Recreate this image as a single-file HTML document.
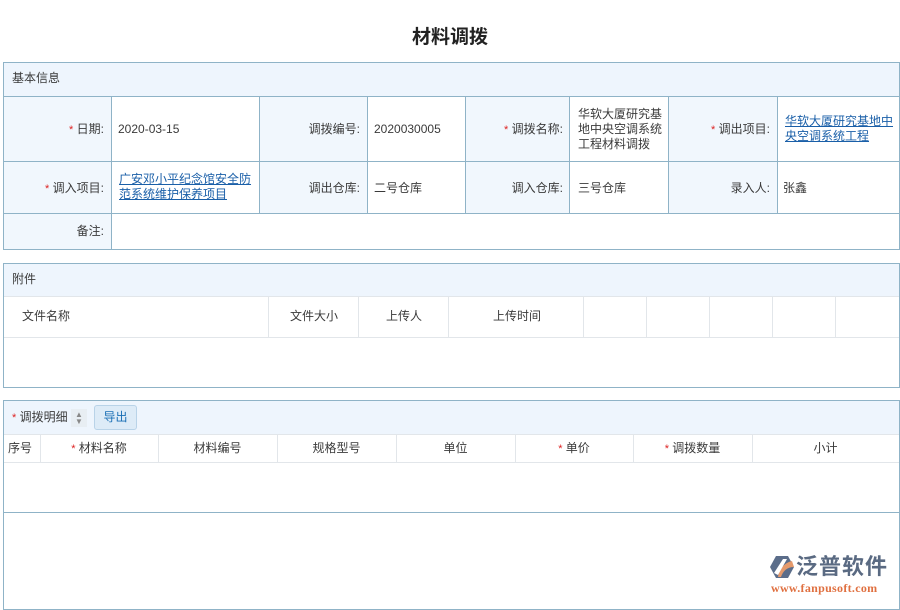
<!DOCTYPE html>
<html><head><meta charset="utf-8"><style>
*{margin:0;padding:0;box-sizing:border-box}
body{width:900px;height:600px;background:#fff;position:relative;overflow:hidden;font-family:"Liberation Sans","Noto Sans CJK SC",sans-serif;font-size:12px;color:#3a3a3a}
.a{position:absolute}
.b{border:1px solid #8fb3c7}
.h{background:#eef5fd}
.lb{background:#f1f7fd}
.t{position:absolute;line-height:15px}
.r{text-align:right}
.s{color:#d22;font-size:11px}
.lk{color:#1a5fa8;text-decoration:underline}
.vl{position:absolute;width:1px;background:#8fb3c7}
.hl{position:absolute;height:1px;background:#8fb3c7}
.gv{position:absolute;width:1px;background:#e2e6ea}
.gh{position:absolute;height:1px;background:#e2e6ea}
</style></head><body>
<div class="a" style="left:0;top:22px;width:900px;text-align:center;font-size:19px;font-weight:bold;color:#222">材料调拨</div>

<div class="a b" style="left:3px;top:62px;width:897px;height:188px"></div>
<div class="a h" style="left:4px;top:63px;width:895px;height:33px"></div>
<div class="t" style="left:12px;top:71px">基本信息</div>
<div class="a lb" style="left:4px;top:97px;width:107px;height:152px"></div>
<div class="a lb" style="left:260px;top:97px;width:107px;height:116px"></div>
<div class="a lb" style="left:466px;top:97px;width:103px;height:116px"></div>
<div class="a lb" style="left:669px;top:97px;width:108px;height:116px"></div>
<div class="hl" style="left:3px;top:96px;width:897px"></div>
<div class="hl" style="left:3px;top:161px;width:897px"></div>
<div class="hl" style="left:3px;top:213px;width:897px"></div>
<div class="vl" style="left:111px;top:96px;height:153px"></div>
<div class="vl" style="left:259px;top:96px;height:117px"></div>
<div class="vl" style="left:367px;top:96px;height:117px"></div>
<div class="vl" style="left:465px;top:96px;height:117px"></div>
<div class="vl" style="left:569px;top:96px;height:117px"></div>
<div class="vl" style="left:668px;top:96px;height:117px"></div>
<div class="vl" style="left:777px;top:96px;height:117px"></div>

<div class="t r" style="left:4px;width:100px;top:122px"><span class="s">*</span> 日期:</div>
<div class="t" style="left:118px;top:122px">2020-03-15</div>
<div class="t r" style="left:260px;width:100px;top:122px">调拨编号:</div>
<div class="t" style="left:374px;top:122px">2020030005</div>
<div class="t r" style="left:466px;width:97px;top:122px"><span class="s">*</span> 调拨名称:</div>
<div class="t" style="left:578px;top:107px;width:88px">华软大厦研究基地中央空调系统工程材料调拨</div>
<div class="t r" style="left:669px;width:101px;top:122px"><span class="s">*</span> 调出项目:</div>
<div class="t lk" style="left:785px;top:114px;width:110px">华软大厦研究基地中央空调系统工程</div>

<div class="t r" style="left:4px;width:100px;top:181px"><span class="s">*</span> 调入项目:</div>
<div class="t lk" style="left:119px;top:172px;width:134px">广安邓小平纪念馆安全防范系统维护保养项目</div>
<div class="t r" style="left:260px;width:100px;top:181px">调出仓库:</div>
<div class="t" style="left:374px;top:181px">二号仓库</div>
<div class="t r" style="left:466px;width:97px;top:181px">调入仓库:</div>
<div class="t" style="left:578px;top:181px">三号仓库</div>
<div class="t r" style="left:669px;width:101px;top:181px">录入人:</div>
<div class="t" style="left:783px;top:181px">张鑫</div>
<div class="t r" style="left:4px;width:100px;top:224px">备注:</div>

<div class="a b" style="left:3px;top:263px;width:897px;height:125px"></div>
<div class="a h" style="left:4px;top:264px;width:895px;height:32px"></div>
<div class="gh" style="left:4px;top:296px;width:895px"></div>
<div class="gh" style="left:4px;top:337px;width:895px"></div>
<div class="t" style="left:12px;top:272px">附件</div>
<div class="gv" style="left:268px;top:297px;height:40px"></div>
<div class="gv" style="left:358px;top:297px;height:40px"></div>
<div class="gv" style="left:448px;top:297px;height:40px"></div>
<div class="gv" style="left:583px;top:297px;height:40px"></div>
<div class="gv" style="left:646px;top:297px;height:40px"></div>
<div class="gv" style="left:709px;top:297px;height:40px"></div>
<div class="gv" style="left:772px;top:297px;height:40px"></div>
<div class="gv" style="left:835px;top:297px;height:40px"></div>
<div class="t" style="left:22px;top:309px">文件名称</div>
<div class="t" style="left:290px;top:309px">文件大小</div>
<div class="t" style="left:386px;top:309px">上传人</div>
<div class="t" style="left:493px;top:309px">上传时间</div>

<div class="a b" style="left:3px;top:400px;width:897px;height:210px"></div>
<div class="a h" style="left:4px;top:401px;width:895px;height:33px"></div>
<div class="gh" style="left:4px;top:434px;width:895px"></div>
<div class="gh" style="left:4px;top:462px;width:895px"></div>
<div class="hl" style="left:3px;top:512px;width:897px"></div>
<div class="t" style="left:12px;top:410px"><span class="s">*</span> 调拨明细</div>
<div class="a" style="left:71px;top:409px;width:16px;height:18px;background:#e8eef3;color:#888;font-size:8px;line-height:7px;text-align:center;padding-top:2px">▲<br>▼</div>
<div class="a" style="left:94px;top:405px;width:43px;height:25px;background:#ddebf7;border:1px solid #b9d3e8;border-radius:3px;color:#1a6fb5;text-align:center;line-height:23px">导出</div>
<div class="gv" style="left:40px;top:435px;height:27px"></div>
<div class="gv" style="left:158px;top:435px;height:27px"></div>
<div class="gv" style="left:277px;top:435px;height:27px"></div>
<div class="gv" style="left:396px;top:435px;height:27px"></div>
<div class="gv" style="left:515px;top:435px;height:27px"></div>
<div class="gv" style="left:633px;top:435px;height:27px"></div>
<div class="gv" style="left:752px;top:435px;height:27px"></div>
<div class="t" style="left:8px;top:441px">序号</div>
<div class="t" style="left:40px;width:118px;text-align:center;top:441px"><span class="s">*</span> 材料名称</div>
<div class="t" style="left:158px;width:119px;text-align:center;top:441px">材料编号</div>
<div class="t" style="left:277px;width:119px;text-align:center;top:441px">规格型号</div>
<div class="t" style="left:396px;width:119px;text-align:center;top:441px">单位</div>
<div class="t" style="left:515px;width:118px;text-align:center;top:441px"><span class="s">*</span> 单价</div>
<div class="t" style="left:633px;width:119px;text-align:center;top:441px"><span class="s">*</span> 调拨数量</div>
<div class="t" style="left:752px;width:147px;text-align:center;top:441px">小计</div>

<svg class="a" style="left:769px;top:555px" width="26" height="24" viewBox="0 0 26 24">
<polygon points="7,1 19,1 25,12 19,23 7,23 1,12" fill="#5b6d8a"/>
<path d="M9,22 C10,14 15,8 23,6 L25,12 C18,12 14,16 12,22 Z" fill="#e59a6c"/>
<path d="M5,18 L14,4 L18,4 L9,20Z" fill="#fff"/>
</svg>
<div class="a" style="left:796px;top:554px;font-size:22px;line-height:26px;color:#5a6a82;letter-spacing:1px;font-weight:bold">泛普软件</div>
<div class="a" style="left:771px;top:582px;font-family:'Liberation Serif',serif;font-size:12px;line-height:12px;color:#e07040;letter-spacing:0.3px;font-weight:bold">www.fanpusoft.com</div>
</body></html>
